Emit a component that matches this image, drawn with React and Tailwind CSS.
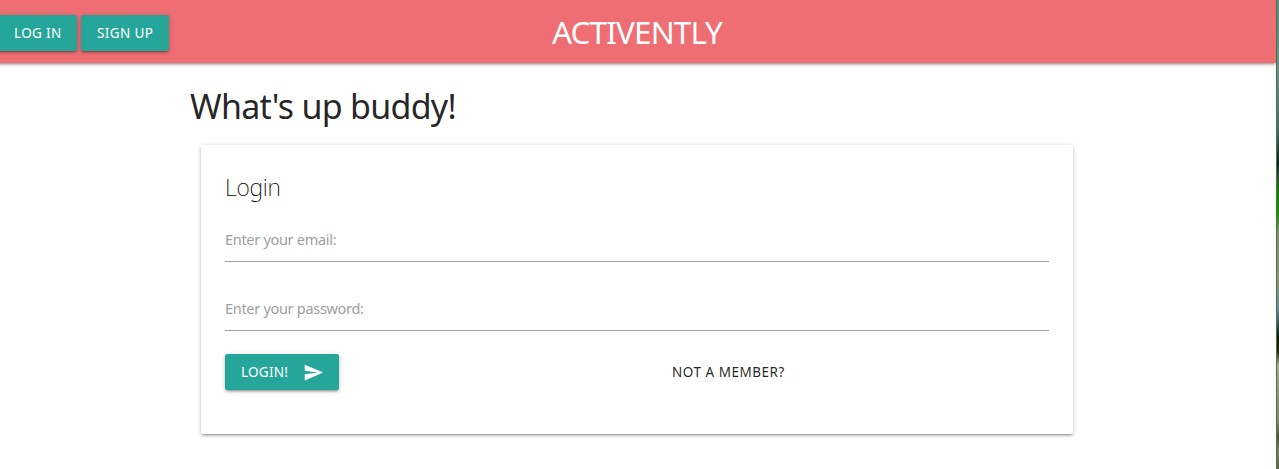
const raised =
  'shadow-[0_2px_2px_0_rgba(0,0,0,0.14),0_3px_1px_-2px_rgba(0,0,0,0.12),0_1px_5px_0_rgba(0,0,0,0.2)]';

function Button({ className, children }) {
  return (
    <button
      type="button"
      className={`flex h-9 items-center whitespace-nowrap rounded-[2px] bg-[#26a69a] text-[13.5px] text-white ${raised} ${className}`}
    >
      {children}
    </button>
  );
}

function Field({ label, className }) {
  return (
    <label className={`block h-[45px] border-b border-[#9e9e9e] text-[14.5px] leading-[45px] text-[#9e9e9e] ${className}`}>
      <span>{label}</span>
    </label>
  );
}

function SendIcon() {
  return (
    <svg viewBox="0 0 24 24" className="ml-[15px] size-[21px]" fill="currentColor">
      <path d="M2.01 21L23 12 2.01 3 2 10l15 2-15 2z" />
    </svg>
  );
}

export default function App() {
  return (
    <div className="flex h-[469px] w-full overflow-hidden bg-white font-['Noto_Sans','Open_Sans',sans-serif] text-[rgba(0,0,0,0.87)]">
      <div className="flex min-w-0 flex-1 flex-col overflow-hidden">
        <nav className={`-ml-2 grid h-[63px] shrink-0 grid-cols-[1fr_auto_1fr] bg-[#ee6e73] pl-2 text-white ${raised}`}>
          <div className="flex gap-1 pt-[15px]">
            <Button className="-ml-0.5 w-[79px] pl-4 tracking-[0.35px]">LOG IN</Button>
            <Button className="w-[88px] pl-4 tracking-[0.4px]">SIGN UP</Button>
          </div>
          <div className="-ml-px mr-px h-[63px] text-[31.5px] leading-[64px] tracking-[-0.88px]">ACTIVENTLY</div>
        </nav>
        <main className="ml-[190px] w-[893px]">
          <h1 className="mt-[22px] h-[42px] whitespace-nowrap text-[34px] leading-[42px] tracking-[-0.72px]">What's up buddy!</h1>
          <section className={`ml-[11px] mt-[18px] h-[289px] w-[872px] rounded-[2px] bg-white px-6 pt-6 ${raised}`}>
            <h2 className="h-8 text-[23px] font-extralight leading-[36px] tracking-[-0.3px] text-black">Login</h2>
            <Field label="Enter your email:" className="mt-4 tracking-[-0.3px]" />
            <Field label="Enter your password:" className="mt-6 tracking-[-0.3px]" />
            <div className="mt-[23px] grid grid-cols-2">
              <Button className="w-[114px] pl-4 tracking-[0.25px]">
                <span>LOGIN!</span>
                <SendIcon />
              </Button>
              <a className="pl-[35px] text-[13.5px] leading-9 tracking-[0.52px]">NOT A MEMBER?</a>
            </div>
          </section>
        </main>
      </div>
      <div className="w-[3px] shrink-0 border-l border-[#2c8a2c] bg-[linear-gradient(to_bottom,#707f8c_0px,#788591_70px,#566370_130px,#15181c_163px,#3a403c_175px,#1c7905_192px,#278b08_215px,#8c8478_233px,#988b82_280px,#7085a0_310px,#40485c_324px,#17100f_337px,#2c211f_352px,#aca49b_365px,#91897f_400px,#8c8379_420px,#574e4a_438px,#827873_450px,#695c58_469px)]" />
    </div>
  );
}
